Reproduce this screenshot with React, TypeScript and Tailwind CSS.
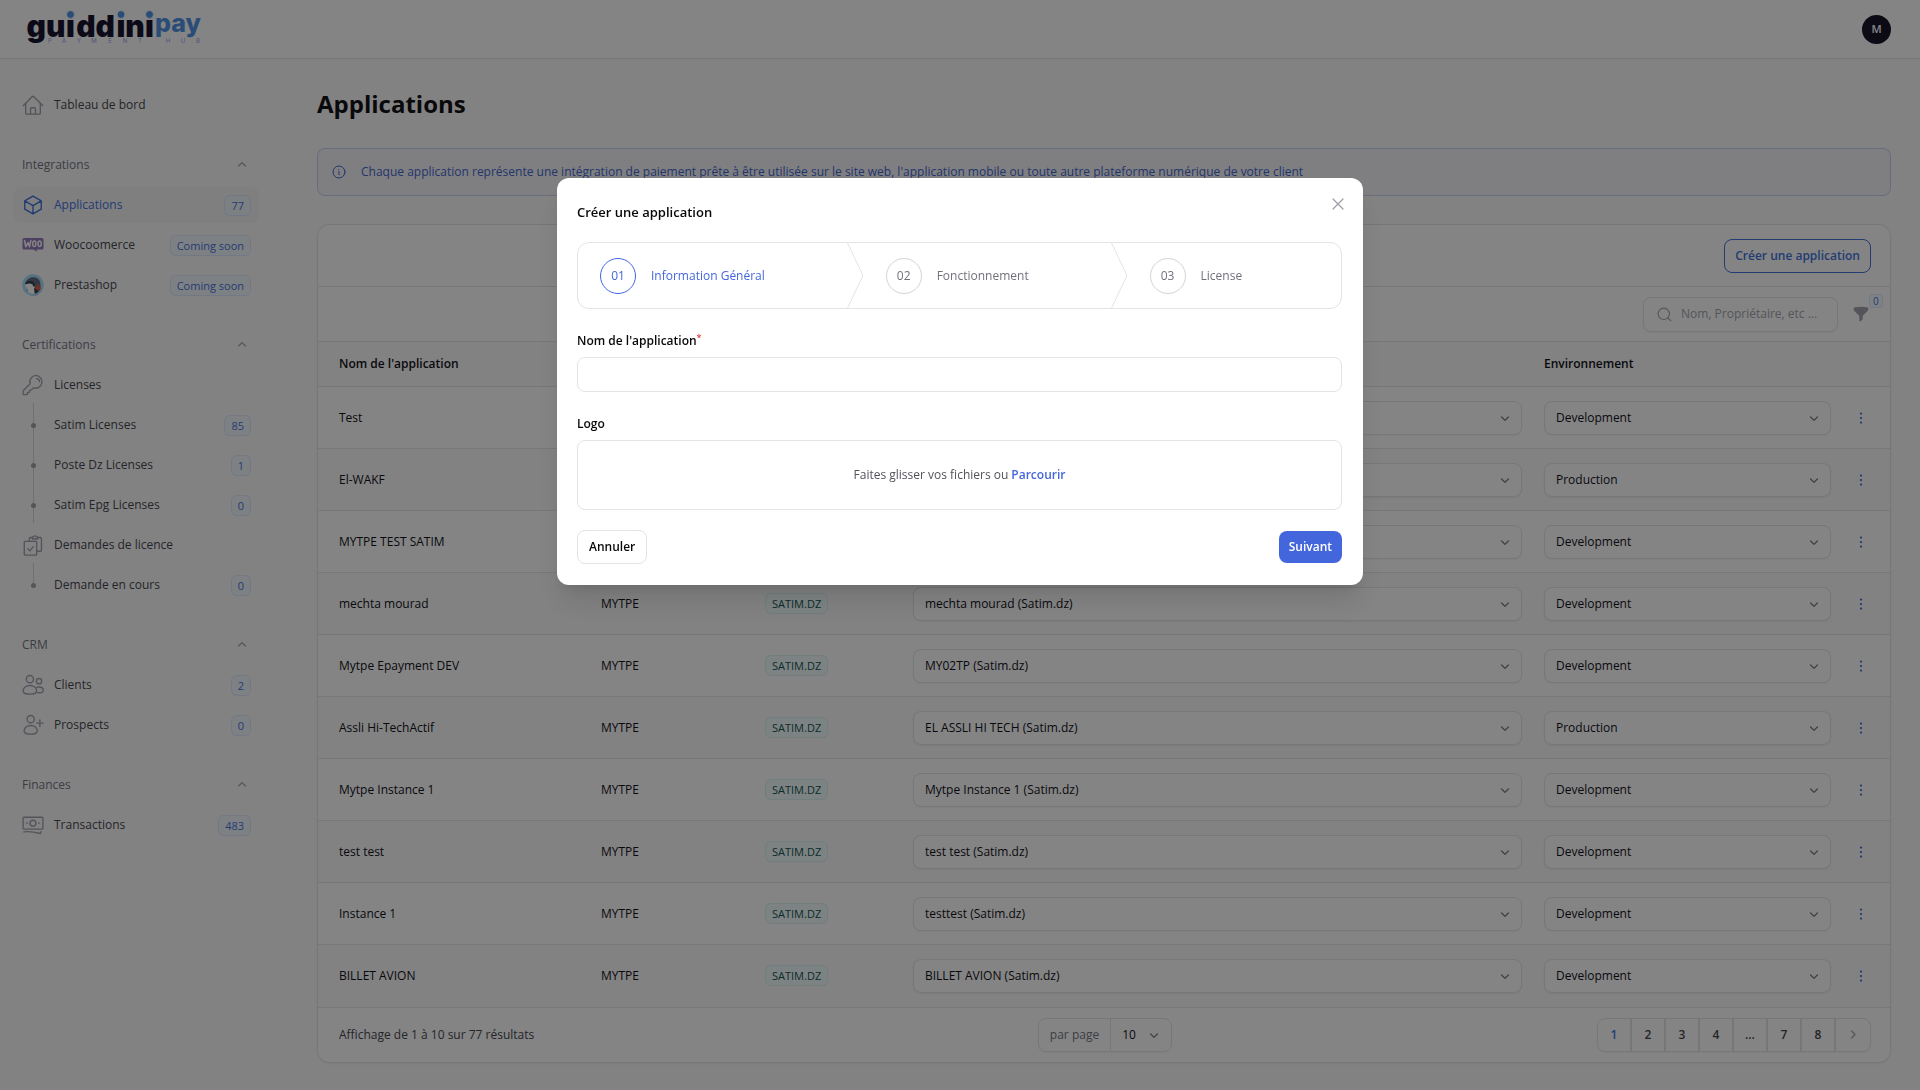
import { useState } from "react";
import type { ReactNode } from "react";
import {
  HiEllipsisVertical,
  HiFunnel,
  HiMiniChevronDown,
  HiMiniChevronRight,
  HiMiniChevronUp,
  HiOutlineCube,
  HiOutlineInformationCircle,
  HiOutlineXMark,
} from "react-icons/hi2";
import { LuSearch } from "react-icons/lu";

type NavItem = { label: string; badge?: string; icon?: ReactNode; active?: boolean; line?: "mid" | "end" };
type NavGroup = { label: string; items: NavItem[] };
type Row = { name: string; license: string; env: string };

const ENVIRONMENTS = ["Development", "Production"];

const ROWS: Row[] = [
  { name: "Test", license: "Test (Satim.dz)", env: "Development" },
  { name: "El-WAKF", license: "El-WAKF (Satim.dz)", env: "Production" },
  { name: "MYTPE TEST SATIM", license: "MYTPE TEST (Satim.dz)", env: "Development" },
  { name: "mechta mourad", license: "mechta mourad (Satim.dz)", env: "Development" },
  { name: "Mytpe Epayment DEV", license: "MY02TP (Satim.dz)", env: "Development" },
  { name: "Assli Hi-TechActif", license: "EL ASSLI HI TECH (Satim.dz)", env: "Production" },
  { name: "Mytpe Instance 1", license: "Mytpe Instance 1 (Satim.dz)", env: "Development" },
  { name: "test test", license: "test test (Satim.dz)", env: "Development" },
  { name: "Instance 1", license: "testtest (Satim.dz)", env: "Development" },
  { name: "BILLET AVION", license: "BILLET AVION (Satim.dz)", env: "Development" },
];

function LineIcon({ children }: { children: ReactNode }) {
  return (
    <svg viewBox="0 0 24 24" width={22} height={22} fill="none" stroke="currentColor" strokeWidth={1.5} strokeLinecap="round" strokeLinejoin="round" aria-hidden="true">
      {children}
    </svg>
  );
}

const HomeIcon = () => (
  <LineIcon>
    <path d="M1.5 12.5 11.3 2.7a1 1 0 0 1 1.4 0l9.8 9.8" />
    <path d="M4 10.2V21a1 1 0 0 0 1 1h14a1 1 0 0 0 1-1V10.2" />
    <path d="M9.3 22v-6a1 1 0 0 1 1-1h3.4a1 1 0 0 1 1 1v6" />
  </LineIcon>
);

const KeyIcon = () => (
  <LineIcon>
    <path d="M15.6 1.5a7 7 0 0 0-6.7 9.1L1.6 17.9a1 1 0 0 0-.3.7v3.2c0 .4.3.7.7.7h3.1c.5 0 .8-.3.8-.8v-1.6h1.6c.5 0 .8-.3.8-.8v-1.7h1.4c.3 0 .5-.1.7-.3l2.2-2.2a7 7 0 1 0 3-13.6Z" />
    <path d="M15.8 5a3.6 3.6 0 0 1 3.4 3.4" />
  </LineIcon>
);

const ClipboardIcon = () => (
  <LineIcon>
    <rect x="2.5" y="8" width="13.5" height="15" rx="1" />
    <path d="m6.5 16.2 2 2.2 3.8-4.6" />
    <path d="M8 8V4.8a1 1 0 0 1 1-1h2.2M17 3.8h3.2a1 1 0 0 1 1 1v13a1 1 0 0 1-1 1h-4" />
    <path d="M11.2 5.4V3.5l1.5-.5a1.6 1.6 0 0 1 2.9 0l1.5.5v1.9Z" />
  </LineIcon>
);

const ClientsIcon = () => (
  <LineIcon>
    <circle cx="8.6" cy="5.6" r="3.9" />
    <circle cx="18.6" cy="7.8" r="2.9" />
    <path d="M8.6 12.6c-4.3 0-7.4 2.5-7.4 5.6 0 2.6 2.6 3.8 7.4 3.8s7.4-1.2 7.4-3.8c0-3.1-3.1-5.6-7.4-5.6Z" />
    <path d="M16 14.6c.8-.3 1.7-.4 2.6-.4 2.7 0 4.6 1.7 4.6 3.8 0 1.5-1.3 2.5-4.6 2.5-1.2 0-2.2-.1-3-.4" />
  </LineIcon>
);

const ProspectsIcon = () => (
  <LineIcon>
    <circle cx="9.5" cy="5.6" r="3.9" />
    <path d="M9.5 12.6c-4.2 0-7.2 2.5-7.2 5.6 0 2.6 2.5 3.8 7.2 3.8s7.2-1.2 7.2-3.8c0-3.1-3-5.6-7.2-5.6Z" />
    <path d="M19.5 6.5v7M16 10h7" />
  </LineIcon>
);

const CashIcon = () => (
  <LineIcon>
    <rect x="1.2" y="3.5" width="21.6" height="13" rx="1" />
    <circle cx="12" cy="10" r="3.2" />
    <path d="M5.5 10h.1M18.4 10h.1" strokeWidth={1.8} />
    <path d="M2 19.5c6.5-.8 12 .3 18 1.8l.5-2" />
  </LineIcon>
);

const WooIcon = () => (
  <svg viewBox="0 0 22 14" width={22} height={14} aria-hidden="true">
    <path d="M2 0h18a1.5 1.5 0 0 1 1.5 1.5V10a1.5 1.5 0 0 1-1.5 1.5h-5.5l.6 2.3-3.7-2.3H2A1.5 1.5 0 0 1 .5 10V1.5A1.5 1.5 0 0 1 2 0Z" fill="#8f74b5" />
    <g fill="none" stroke="#fff" strokeWidth="1.5" strokeLinecap="round" strokeLinejoin="round">
      <path d="m2.5 2.5 1.3 6.3L6 4.5l1.500 4.300L8.800 2.500" />
      <ellipse cx="12.3" cy="5.8" rx="1.6" ry="2.7" />
      <ellipse cx="17.6" cy="5.8" rx="1.6" ry="2.7" />
    </g>
  </svg>
);

const PrestaIcon = () => (
  <svg viewBox="0 0 22 22" width={22} height={22} aria-hidden="true">
    <clipPath id="presta"><circle cx="11" cy="11" r="10.5" /></clipPath>
    <g clipPath="url(#presta)">
      <rect width="22" height="22" fill="#a4dbf5" />
      <path d="M3.5 9C4.5 5 8 3.2 11.5 3.2c4.5 0 7 3.3 7 7.8 0 5-1 8-3 11H7Z" fill="#5b6675" />
      <path d="M3 11.5c1-3 6-3.5 8.5-1 2 2.500 1 6.500 4 11.500H5.500c1.500-3 .5-7-2.500-10.500Z" fill="#fff" />
      <path d="M3.5 8.5c3-2.5 8-2 9.5 2l-1.500 1C9.500 9 6.500 9 3.500 10.500Z" fill="#2b3846" />
      <path d="M12 14c2 .5 3.5 2 5 5l-2 3h-2Z" fill="#2b3846" />
      <path d="m15.5 9.5 3.7 4.5-2 3-5-3 2-1Z" fill="#d9533a" />
      <circle cx="11.8" cy="11.6" r="1" fill="#2b3846" />
    </g>
    <circle cx="11" cy="11" r="9.8" fill="none" stroke="#a4dbf5" strokeWidth="1.8" />
  </svg>
);

const NAV: NavGroup[] = [
  {
    label: "Integrations",
    items: [
      { label: "Applications", badge: "77", active: true, icon: <HiOutlineCube size={22} /> },
      { label: "Woocoomerce", badge: "Coming soon", icon: <WooIcon /> },
      { label: "Prestashop", badge: "Coming soon", icon: <PrestaIcon /> },
    ],
  },
  {
    label: "Certifications",
    items: [
      { label: "Licenses", icon: <KeyIcon /> },
      { label: "Satim Licenses", badge: "85", line: "mid" },
      { label: "Poste Dz Licenses", badge: "1", line: "mid" },
      { label: "Satim Epg Licenses", badge: "0", line: "mid" },
      { label: "Demandes de licence", icon: <ClipboardIcon /> },
      { label: "Demande en cours", badge: "0", line: "end" },
    ],
  },
  {
    label: "CRM",
    items: [
      { label: "Clients", badge: "2", icon: <ClientsIcon /> },
      { label: "Prospects", badge: "0", icon: <ProspectsIcon /> },
    ],
  },
  { label: "Finances", items: [{ label: "Transactions", badge: "483", icon: <CashIcon /> }] },
];

function Logo() {
  return (
    <a href="#" aria-label="Guiddini Pay" className="block">
      <svg viewBox="26 0 180 58" width={180} height={58} fontFamily="Inter, sans-serif" fontWeight={900} textAnchor="middle" aria-hidden="true">
        <text y="37" fontSize="30" fill="#0e0b26">
          <tspan x="46">gu</tspan>
          <tspan x="70.5">i</tspan>
          <tspan x="95.5">dd</tspan>
          <tspan x="121">i</tspan>
          <tspan x="135">n</tspan>
          <tspan x="149.5">i</tspan>
        </text>
        <text x="178" y="32" fontSize="25" fontWeight={800} fill="#4a90e2">pay</text>
        <g fill="#4a90e2" stroke="#fff" strokeWidth="1">
          <circle cx="70.5" cy="14.5" r="4" />
          <circle cx="121" cy="14.5" r="4" />
          <circle cx="149.5" cy="14.5" r="4" />
        </g>
        <text x="50 64 79 94 110 125 140 154 168 183 198" y="43" fontSize="6" fontWeight={400} fill="#8fa3dc">PAYMENT HUB</text>
      </svg>
    </a>
  );
}

function SidebarItem({ item }: { item: NavItem }) {
  return (
    <a
      href="#"
      className={`flex h-9 items-center gap-[10px] rounded-lg px-2 ${item.active ? "bg-zinc-100 text-[#3b6fd8]" : "text-zinc-700"}`}
    >
      <span className={`flex w-[22px] self-stretch items-center justify-center ${item.active ? "" : "text-zinc-400"}`}>
        {item.line ? (
          <span className="relative flex h-full w-full items-center justify-center">
            <span className={`absolute -top-1 left-1/2 w-px bg-zinc-300 ${item.line === "end" ? "h-[22px]" : "h-10"}`} />
            <span className="relative size-[5px] rounded-full bg-zinc-400" />
          </span>
        ) : (
          item.icon
        )}
      </span>
      <span className="flex-1 font-medium">{item.label}</span>
      {item.badge && (
        <span className="rounded-md border border-blue-600/10 bg-blue-50/60 px-[6px] text-[11px] leading-[19px] font-medium text-[#3b6fd8]">
          {item.badge}
        </span>
      )}
    </a>
  );
}

function Sidebar() {
  return (
    <nav className="w-[273px] shrink-0 px-[14px] pt-7">
      <SidebarItem item={{ label: "Tableau de bord", icon: <HomeIcon /> }} />
      <div className="mt-6 flex flex-col gap-6">
        {NAV.map((group) => (
          <section key={group.label} className="flex flex-col gap-1">
            <button type="button" className="flex h-9 items-center justify-between pr-[9px] pl-2 font-medium text-zinc-500">
              {group.label}
              <HiMiniChevronUp size={16} className="text-zinc-400" />
            </button>
            {group.items.map((item) => (
              <SidebarItem key={item.label} item={item} />
            ))}
          </section>
        ))}
      </div>
    </nav>
  );
}

function Select({ label, value, options }: { label: string; value: string; options: string[] }) {
  return (
    <div className="relative">
      <select
        aria-label={label}
        defaultValue={value}
        className="block h-[34px] w-full appearance-none rounded-lg border border-zinc-200 bg-white px-[11px] text-zinc-950 shadow-xs"
      >
        {options.map((option) => (
          <option key={option}>{option}</option>
        ))}
      </select>
      <HiMiniChevronDown size={16} className="pointer-events-none absolute top-[9px] right-[9px] text-zinc-500" />
    </div>
  );
}

function ApplicationsTable() {
  return (
    <table className="w-full table-fixed border-t border-zinc-200 text-left">
      <colgroup>
        <col className="w-[272px]" />
        <col className="w-[164px]" />
        <col className="w-[148px]" />
        <col />
        <col className="w-[309px]" />
        <col className="w-[48px]" />
      </colgroup>
      <thead>
        <tr className="h-[45px] bg-zinc-50 text-zinc-950">
          <th className="pr-[11px] pl-[21px] font-semibold">Nom de l'application</th>
          <th className="px-[11px] font-semibold">Propriétaire</th>
          <th className="px-[11px] font-semibold">Type</th>
          <th className="px-[11px] font-semibold">License</th>
          <th className="px-[11px] font-semibold">Environnement</th>
          <th />
        </tr>
      </thead>
      <tbody>
        {ROWS.map((row) => (
          <tr key={row.name} className="h-[62px] border-t border-zinc-200 text-zinc-950 even:bg-zinc-50">
            <td className="pr-[11px] pl-[21px]">{row.name}</td>
            <td className="px-[11px]">MYTPE</td>
            <td className="px-[11px]">
              <span className="inline-block rounded-md border border-teal-600/10 bg-teal-50 px-[6px] text-[11px] leading-[19px] text-teal-900">
                SATIM.DZ
              </span>
            </td>
            <td className="px-[11px]">
              <Select label={`License ${row.name}`} value={row.license} options={[row.license]} />
            </td>
            <td className="px-[11px]">
              <Select label={`Environnement ${row.name}`} value={row.env} options={ENVIRONMENTS} />
            </td>
            <td>
              <button type="button" aria-label="Actions" className="block pl-[10px] text-[#3b6fd8]">
                <HiEllipsisVertical size={18} />
              </button>
            </td>
          </tr>
        ))}
      </tbody>
    </table>
  );
}

function Pagination() {
  const pages = ["1", "2", "3", "4", "...", "7", "8"];
  return (
    <div className="flex h-[34px] divide-x-2 divide-zinc-200 rounded-lg border border-zinc-200 font-semibold text-zinc-700 shadow-xs">
      {pages.map((page, i) => (
        <button key={page} type="button" className={`w-[34px] ${i === 0 ? "text-[#3b6fd8]" : ""}`}>
          {page}
        </button>
      ))}
      <button type="button" aria-label="Page suivante" className="flex w-[34px] items-center justify-center text-zinc-400">
        <HiMiniChevronRight size={17} />
      </button>
    </div>
  );
}

const STEPS = ["Information Général", "Fonctionnement", "License"];

function CreateModal({ onClose }: { onClose: () => void }) {
  const [name, setName] = useState("");
  return (
    <div className="fixed inset-0 flex items-start justify-center bg-zinc-950/50 pt-[178px]">
      <div role="dialog" aria-labelledby="modal-title" className="relative w-full max-w-[806px] rounded-xl bg-white pt-6 pr-[21px] pb-[21px] pl-5 shadow-xl">
        <button type="button" aria-label="Fermer" onClick={onClose} className="absolute top-[16px] right-[15px] text-zinc-400">
          <HiOutlineXMark size={20} />
        </button>
        <h2 id="modal-title" className="text-[13px] leading-5 font-semibold text-zinc-950">Créer une application</h2>

        <ol className="mt-5 flex rounded-xl border border-zinc-200">
          {STEPS.map((step, i) => (
            <li key={step} className="flex h-[65px] flex-auto items-center last:pr-[17px]">
              <button type="button" className={`flex items-center gap-[15px] pl-[22px] font-medium ${i === 0 ? "text-[#4466dd]" : "text-zinc-500"}`}>
                <span className={`flex size-9 items-center justify-center rounded-full border ${i === 0 ? "border-[#4466dd]" : "border-zinc-300"}`}>
                  {`0${i + 1}`}
                </span>
                {step}
              </button>
              {i < STEPS.length - 1 && (
                <svg viewBox="0 0 17 65" width={17} height={65} fill="none" stroke="#e4e4e7" className="ml-auto" aria-hidden="true">
                  <path d="M.5 0 16 32.5.5 65" />
                </svg>
              )}
            </li>
          ))}
        </ol>

        <form className="flex flex-col" onSubmit={(e) => e.preventDefault()}>
          <label htmlFor="app-name" className="mt-[23px] font-semibold text-zinc-950">
            Nom de l'application<sup className="font-medium text-red-600">*</sup>
          </label>
          <input
            id="app-name"
            value={name}
            onChange={(e) => setName(e.target.value)}
            className="mt-[7px] h-[35px] rounded-lg border border-zinc-200 px-3 outline-none"
          />
          <label htmlFor="app-logo" className="mt-[23px] font-semibold text-zinc-950">Logo</label>
          <label htmlFor="app-logo" className="mt-[7px] flex h-[70px] items-center justify-center gap-[3px] rounded-lg border border-zinc-200 text-zinc-600">
            Faites glisser vos fichiers ou <span className="font-semibold text-[#4466dd]">Parcourir</span>
            <input id="app-logo" type="file" className="sr-only" />
          </label>
          <div className="mt-5 flex items-center justify-between">
            <button type="button" onClick={onClose} className="h-[34px] rounded-lg border border-zinc-200 px-[11px] font-semibold text-zinc-950">
              Annuler
            </button>
            <button type="submit" className="h-8 rounded-lg bg-[#4466dd] px-[10px] font-semibold text-white">Suivant</button>
          </div>
        </form>
      </div>
    </div>
  );
}

export default function App() {
  const [open, setOpen] = useState(true);
  return (
    <div className="min-h-screen bg-zinc-50 font-['Open_Sans',sans-serif] text-[12px] leading-[18px]">
      <header className="flex h-[59px] items-center justify-between border-b border-zinc-200 bg-white pr-[29px] pl-[26px]">
        <Logo />
        <button type="button" className="size-[29px] rounded-full bg-[#0e0b1e] text-[11px] font-semibold text-white">M</button>
      </header>

      <div className="flex">
        <Sidebar />
        <main className="min-w-0 flex-1 pt-[27px] pr-[29px] pb-7 pl-11">
          <h1 className="text-[24px] leading-9 font-bold text-zinc-950">Applications</h1>
          <div className="mt-[26px] flex h-12 items-center gap-[14px] rounded-lg border border-[#4466dd]/25 bg-[#4466dd]/3 px-[13px] text-[#3b63c8]">
            <HiOutlineInformationCircle size={16} />
            Chaque application représente une intégration de paiement prête à être utilisée sur le site web, l'application mobile ou toute autre plateforme numérique de votre client
          </div>

          <section className="mt-7 rounded-xl border border-zinc-200 bg-white shadow-xs">
            <div className="flex h-[61px] items-center justify-end pr-[19px]">
              <button type="button" onClick={() => setOpen(true)} className="h-[34px] rounded-lg border border-[#3b6fd8] px-[10px] font-semibold text-[#3b6fd8]">
                Créer une application
              </button>
            </div>
            <div className="flex h-[55px] items-center justify-end gap-[14px] border-t border-zinc-200 pr-5">
              <label className="flex h-[35px] w-[195px] items-center gap-2 rounded-lg border border-zinc-200 pr-2 pl-3 shadow-xs">
                <LuSearch size={17} strokeWidth={1.5} className="shrink-0 text-zinc-400" />
                <input type="search" aria-label="Rechercher" placeholder="Nom, Propriétaire, etc ..." className="w-full min-w-0 outline-none placeholder:text-zinc-400" />
              </label>
              <button type="button" aria-label="Filtres" className="relative text-zinc-400">
                <HiFunnel size={18} />
                <span className="absolute -top-[11px] left-[17px] rounded border border-blue-600/10 bg-blue-50/60 px-[3px] text-[10px] leading-3 font-medium text-[#3b6fd8]">0</span>
              </button>
            </div>
            <ApplicationsTable />
            <footer className="grid h-[55px] grid-cols-3 items-center border-t border-zinc-200 pr-[19px] pl-[21px]">
              <span className="font-medium text-zinc-700">Affichage de 1 à 10 sur 77 résultats</span>
              <div className="relative flex h-[34px] items-center justify-self-center rounded-lg border border-zinc-200 shadow-xs">
                <label htmlFor="per-page" className="px-[11px] text-zinc-500">par page</label>
                <select id="per-page" className="h-full w-[61px] appearance-none border-l border-zinc-200 pl-[11px] text-zinc-950" defaultValue="10">
                  <option>10</option>
                  <option>25</option>
                </select>
                <HiMiniChevronDown size={16} className="pointer-events-none absolute right-[9px] text-zinc-500" />
              </div>
              <div className="justify-self-end">
                <Pagination />
              </div>
            </footer>
          </section>
        </main>
      </div>

      {open && <CreateModal onClose={() => setOpen(false)} />}
    </div>
  );
}
